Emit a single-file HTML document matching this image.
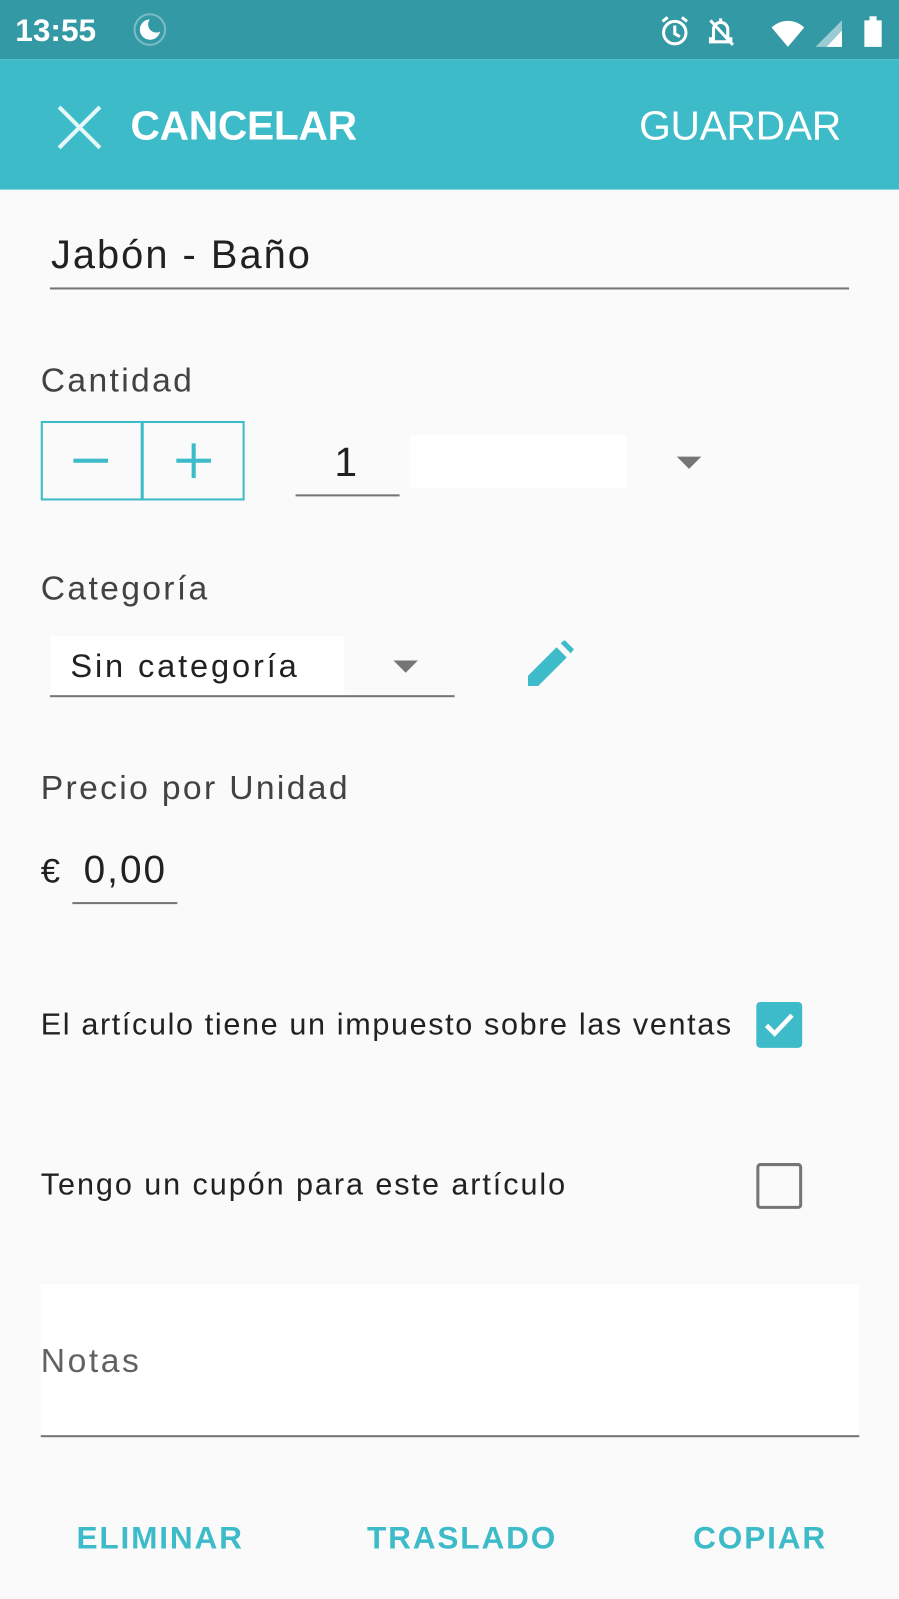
<!DOCTYPE html>
<html><head><meta charset="utf-8"><style>
html,body{margin:0;padding:0;width:899px;height:1599px;overflow:hidden;background:#fafafa;font-family:"Liberation Sans",sans-serif}
#w{position:absolute;left:0;top:0;width:882px;height:1569px;transform:scale(1.0193);transform-origin:0 0}
.a{position:absolute;white-space:nowrap}
.t{color:#212121}
.g{color:#424242}
.lbl{font-size:33px;letter-spacing:2.3px}
.line{position:absolute;height:2px;background:#757575}
.tri{position:absolute;width:0;height:0;border-left:12px solid transparent;border-right:12px solid transparent;border-top:12px solid #757575}
.btn{color:#3dbbc8;font-weight:bold;font-size:31px;top:1491px;letter-spacing:1.8px}
</style></head><body><div id="w">
<div class="a" style="left:0;top:0;width:882px;height:58px;background:#3399a5"></div>
<div class="a" style="left:15px;top:12px;font-size:31px;color:#fff;font-weight:bold">13:55</div>
<div class="a" style="left:131px;top:13px;width:28px;height:28px;border-radius:50%;border:2px solid rgba(255,255,255,.35)"></div>
<svg class="a" style="left:133px;top:15px" width="28" height="28" viewBox="0 0 28 28"><path d="M14 4a10 10 0 1 0 10 12 8 8 0 0 1-10-12z" fill="#fff"/></svg>
<svg class="a" style="left:645px;top:14px" width="225" height="34" viewBox="0 0 225 34"><circle cx="17" cy="18" r="11" fill="none" stroke="#fff" stroke-width="3"/><path d="M17 11v8l5 3M5 7l5-4M29 7l-5-4" stroke="#fff" stroke-width="3" fill="none"/><path d="M62 4v4M55 24V15a7 7 0 0 1 14 0v9h3v3H52v-3zM52 6l22 24" stroke="#fff" stroke-width="3" fill="none"/><path d="M128 32L112 13a23 23 0 0 1 32 0z" fill="#fff"/><path d="M181 6v26h-26z" fill="rgba(255,255,255,.5)"/><path d="M166 32l15-16v16z" fill="#fff"/><rect x="203" y="6" width="17" height="26" fill="#fff"/><rect x="208" y="2" width="7" height="5" fill="#fff"/></svg>
<div class="a" style="left:0;top:58px;width:882px;height:128px;background:#3dbbc8"></div>
<svg class="a" style="left:55px;top:103px" width="46" height="44" viewBox="0 0 46 44"><path d="M3 2l40 40M43 2L3 42" stroke="#e6f7f8" stroke-width="4"/></svg>
<div class="a" style="left:128px;top:102px;font-size:40px;color:#fff;font-weight:bold;letter-spacing:-0.3px">CANCELAR</div>
<div class="a" style="left:627px;top:102px;font-size:40px;color:#fff;letter-spacing:-0.3px">GUARDAR</div>
<div class="a t" style="left:50px;top:229px;font-size:39px;letter-spacing:2px">Jabón - Baño</div>
<div class="line" style="left:49px;top:282px;width:784px"></div>
<div class="a g lbl" style="left:40px;top:354px">Cantidad</div>
<div class="a" style="left:40px;top:413px;width:196px;height:74px;border:2px solid #3dbbc8"></div>
<div class="a" style="left:138px;top:413px;width:3px;height:78px;background:#3dbbc8"></div>
<div class="a" style="left:72px;top:450px;width:34px;height:4px;background:#3dbbc8"></div>
<div class="a" style="left:173px;top:450px;width:34px;height:4px;background:#3dbbc8"></div>
<div class="a" style="left:188px;top:435px;width:4px;height:34px;background:#3dbbc8"></div>
<div class="a t" style="left:328px;top:432px;font-size:40px">1</div>
<div class="line" style="left:290px;top:485px;width:102px"></div>
<div class="a" style="left:402px;top:427px;width:213px;height:52px;background:#fff"></div>
<div class="tri" style="left:664px;top:448px"></div>
<div class="a g lbl" style="left:40px;top:558px">Categoría</div>
<div class="a" style="left:49px;top:624px;width:289px;height:58px;background:#fff"></div>
<div class="a t" style="left:69px;top:635px;font-size:32px;letter-spacing:2.8px">Sin categoría</div>
<div class="tri" style="left:386px;top:648px"></div>
<div class="line" style="left:49px;top:682px;width:397px"></div>
<svg class="a" style="left:514px;top:627px" width="52" height="50" viewBox="0 0 52 50"><path d="M4 36L32 8l10 10-28 28H4z" fill="#3dbbc8"/><path d="M36 4l4-3 9 9-3 4z" fill="#3dbbc8"/></svg>
<div class="a g lbl" style="left:40px;top:754px">Precio por Unidad</div>
<div class="a t" style="left:40px;top:836px;font-size:34px">€</div>
<div class="a t" style="left:82px;top:833px;font-size:38px;letter-spacing:2px">0,00</div>
<div class="line" style="left:71px;top:885px;width:103px"></div>
<div class="a t" style="left:40px;top:989px;font-size:30px;letter-spacing:1.6px">El artículo tiene un impuesto sobre las ventas</div>
<div class="a" style="left:742px;top:983px;width:45px;height:45px;background:#3dbbc8;border-radius:4px"></div>
<svg class="a" style="left:742px;top:983px" width="45" height="45" viewBox="0 0 45 45"><path d="M10 23l8 8 17-18" stroke="#fff" stroke-width="4.5" fill="none"/></svg>
<div class="a t" style="left:40px;top:1146px;font-size:30px;letter-spacing:1.9px">Tengo un cupón para este artículo</div>
<div class="a" style="left:742px;top:1141px;width:39px;height:39px;border:3px solid #757575;border-radius:4px"></div>
<div class="a" style="left:40px;top:1260px;width:803px;height:149px;background:#fff"></div>
<div class="a" style="left:40px;top:1316px;font-size:33px;color:#616161;letter-spacing:2.5px">Notas</div>
<div class="line" style="left:40px;top:1408px;width:803px"></div>
<div class="a btn" style="left:75px">ELIMINAR</div>
<div class="a btn" style="left:360px">TRASLADO</div>
<div class="a btn" style="left:680px">COPIAR</div>
</div></body></html>
